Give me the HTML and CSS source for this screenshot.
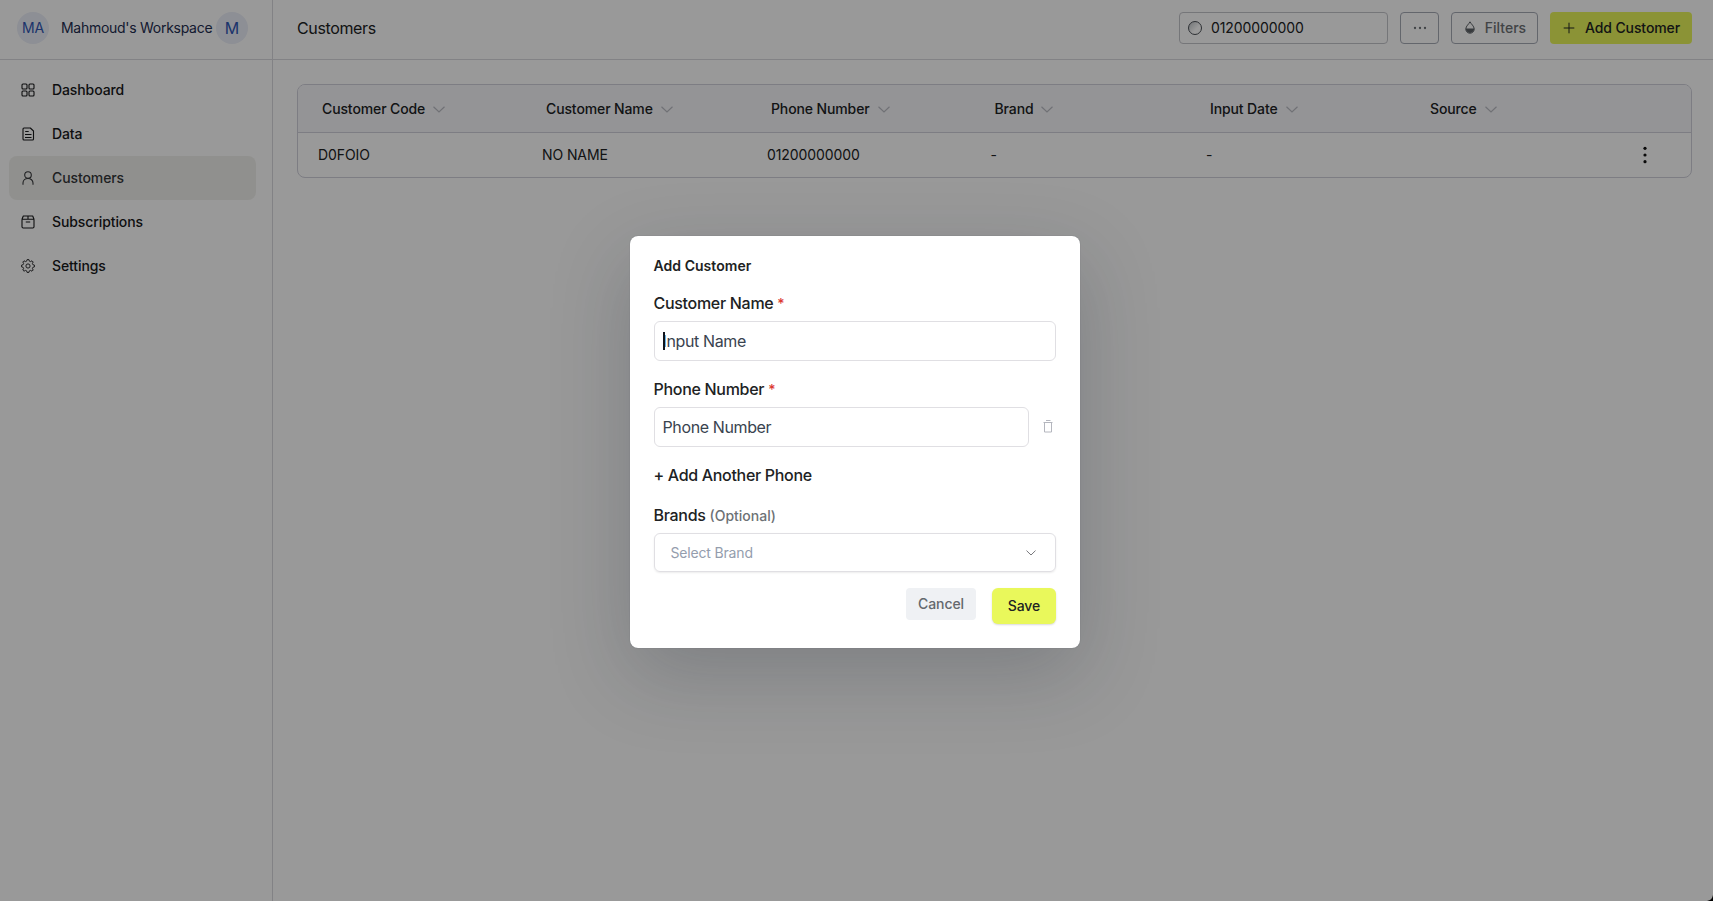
FILE: index.html
```html
<!DOCTYPE html>
<html lang="en">
<head>
<meta charset="utf-8">
<title>Customers</title>
<link rel="stylesheet" href="styles.css">
</head>
<body>
<div class="app">
  <aside class="sidebar">
    <div class="workspace">
      <span class="avatar avatar-small">MA</span>
      <span class="workspace-name">Mahmoud's Workspace</span>
      <span class="avatar">M</span>
    </div>
    <nav class="nav">
      <a class="nav-item"><svg class="icon" viewBox="0 0 16 16"><rect x="2" y="2" width="5" height="5" rx="1"/><rect x="9" y="2" width="5" height="5" rx="1"/><rect x="2" y="9" width="5" height="5" rx="1"/><rect x="9" y="9" width="5" height="5" rx="1"/></svg>Dashboard</a>
      <a class="nav-item"><svg class="icon" viewBox="0 0 16 16"><path d="M4 2h6.300L13.500 5v8a1 1 0 0 1-1 1H4a1 1 0 0 1-1-1V3a1 1 0 0 1 1-1zM5.200 5.500h3.500M5 8.500h6.500M5 11.500h6.500"/></svg>Data</a>
      <a class="nav-item active"><svg class="icon" viewBox="0 0 16 16"><circle cx="8" cy="5" r="3.300"/><path d="M3 14.700V13c0-2.600 2.200-4.500 5-4.500s5 1.900 5 4.500v1.700"/></svg>Customers</a>
      <a class="nav-item"><svg class="icon" viewBox="0 0 16 16"><path d="M2 5.300h12v7.500a1.200 1.200 0 0 1-1.200 1.200H3.200A1.200 1.200 0 0 1 2 12.800zM2 5.300L3.300 2h9.400L14 5.300M8 2v3.300M5.800 8h4.400"/></svg>Subscriptions</a>
      <a class="nav-item"><svg class="icon icon-gear" viewBox="0 0 16 16"><path d="M6.700 3.100L7.200 1.500h1.600l.5 1.600 1.200.5 1.500-.8 1.200 1.200-.8 1.500.5 1.200 1.600.5v1.600l-1.600.5-.5 1.200.8 1.500-1.200 1.200-1.500-.8-1.200.5-.5 1.600H7.200l-.5-1.600-1.200-.5-1.500.8L2.800 12l.8-1.500-.5-1.200-1.600-.5V7.200l1.600-.5.5-1.200L2.800 4 4 2.800l1.500.8z"/><circle cx="8" cy="8" r="2.100"/></svg>Settings</a>
    </nav>
  </aside>
  <div class="main">
    <header class="topbar">
      <h1 class="page-title">Customers</h1>
      <div class="search"><span class="orb"></span>01200000000</div>
      <button class="btn btn-more"><svg class="dots" viewBox="0 0 14 4"><circle cx="2" cy="2" r="1.150"/><circle cx="7" cy="2" r="1.150"/><circle cx="12" cy="2" r="1.150"/></svg></button>
      <button class="btn btn-filters"><svg class="drop" viewBox="0 0 10 13"><path class="drop-line" d="M5 .8C4 3 .8 5.100.8 8a4.200 4.200 0 0 0 8.400 0C9.200 5.100 6 3 5 .8z"/><path class="drop-fill" d="M.8 7.500h8.400a4.200 4.400 0 0 1-8.400 0z"/></svg>Filters</button>
      <button class="btn btn-add"><svg class="plus" viewBox="0 0 12 12"><path d="M6 .7v10.600M.7 6h10.600"/></svg>Add Customer</button>
    </header>
    <section class="table">
      <div class="row head">
        <span>Customer Code<svg class="chev" viewBox="0 0 12 7"><path d="M.5.800l5.500 5.200L11.500.8"/></svg></span>
        <span>Customer Name<svg class="chev" viewBox="0 0 12 7"><path d="M.5.800l5.500 5.200L11.500.8"/></svg></span>
        <span>Phone Number<svg class="chev" viewBox="0 0 12 7"><path d="M.5.800l5.500 5.200L11.500.8"/></svg></span>
        <span>Brand<svg class="chev" viewBox="0 0 12 7"><path d="M.5.800l5.500 5.200L11.500.8"/></svg></span>
        <span>Input Date<svg class="chev" viewBox="0 0 12 7"><path d="M.5.800l5.500 5.200L11.500.8"/></svg></span>
        <span>Source<svg class="chev" viewBox="0 0 12 7"><path d="M.5.800l5.500 5.200L11.500.8"/></svg></span>
      </div>
      <div class="row body">
        <span>D0FOIO</span><span>NO NAME</span><span>01200000000</span><span>-</span><span>-</span><span></span>
        <span><svg class="kebab" viewBox="0 0 4 18"><circle cx="2" cy="2.300" r="1.600"/><circle cx="2" cy="9" r="1.600"/><circle cx="2" cy="15.700" r="1.600"/></svg></span>
      </div>
    </section>
  </div>
</div>
<div class="overlay">
  <div class="modal">
    <h2 class="modal-title">Add Customer</h2>
    <label class="label">Customer Name <span class="req">*</span></label>
    <div class="input"><span class="caret"></span>Input Name</div>
    <label class="label label-phone">Phone Number <span class="req">*</span></label>
    <div class="phone-row">
      <div class="input">Phone Number</div>
      <svg class="trash" viewBox="0 0 10 13"><path d="M3 .5h4.500M.5 2.500h9M1.500 2.500v9.500h7V2.500"/></svg>
    </div>
    <div class="add-phone">+ Add Another Phone</div>
    <label class="label label-brand">Brands <span class="optional">(Optional)</span></label>
    <div class="select">Select Brand<svg class="select-chev" viewBox="0 0 10 6"><path d="M.5.600L5 5 9.500.6"/></svg></div>
    <div class="actions"><button class="btn btn-cancel">Cancel</button><button class="btn btn-save">Save</button></div>
  </div>
</div>
<svg class="corner" viewBox="0 0 6 6"><path d="M6 0v6H0C3.500 5.500 5.500 3.500 6 0z"/></svg>
</body>
</html>
```
FILE: styles.css
```css
* { box-sizing: border-box; }
body { margin: 0; font: 14px/20px Inter, sans-serif; letter-spacing: -.1px; color: #202223; background: #fff; overflow: hidden; }
svg { display: block; flex: none; fill: none; }
.app { display: flex; height: 901px; }
.sidebar { width: 273px; border-right: 1px solid #d9d9de; }
.workspace { height: 60px; border-bottom: 1px solid #d9d9de; display: flex; align-items: center; padding: 0 0 4px 17px; color: #1e2d50; }
.avatar { width: 32px; height: 32px; border-radius: 50%; background: #ebeef8; color: #3056b4; display: flex; align-items: center; justify-content: center; font-size: 16px; font-weight: 400; flex: none; }
.avatar-small { font-size: 14px; font-weight: 400; }
.workspace-name { width: 155px; margin: 0 0 0 12px; white-space: nowrap; letter-spacing: -.28px; }
.nav { padding: 8px 16px 0 9px; }
.nav-item { height: 44px; border-radius: 8px; display: flex; align-items: center; gap: 16px; padding-left: 11px; font-weight: 500; color: #18191b; }
.nav-item.active { background: #f1f1ed; color: #35373a; }
.icon { width: 16px; height: 16px; stroke: currentColor; stroke-width: 1.100; stroke-linejoin: round; }
.icon-gear { stroke-width: .9; }
.main { flex: 1; }
.topbar { height: 60px; border-bottom: 1px solid #d9d9de; display: flex; align-items: center; gap: 12px; padding: 0 21px 4px 24px; }
.page-title { flex: 1; margin: 0; font-size: 16px; font-weight: 400; letter-spacing: -.36px; }
.search { width: 209px; height: 32px; border: 1px solid #c4c5ca; border-radius: 4px; display: flex; align-items: center; gap: 9px; padding-left: 8px; }
.orb { width: 14px; height: 14px; border-radius: 50%; border: 1px solid #4c5158; background: linear-gradient(135deg, #bfc3c7, #fff 60%); }
.btn { height: 32px; font: 500 14px/20px Inter, sans-serif; letter-spacing: -.1px; border-radius: 4px; border: 0; display: flex; align-items: center; justify-content: center; padding: 0; }
.btn-more, .btn-filters { border: 1px solid #a5aab5; background: #fff; color: #6d7175; }
.btn-more { width: 39px; }
.dots { width: 14px; height: 4px; fill: #6d7175; }
.btn-filters { width: 87px; gap: 10px; padding-left: 2px; letter-spacing: 0; }
.drop { width: 10px; height: 13px; }
.drop-line { stroke: #5c6166; }
.drop-fill { fill: #5c6166; }
.btn-add { width: 142px; gap: 10px; background: #e8f65a; color: #202223; padding-left: 1px; }
.plus { width: 12px; height: 12px; stroke: #202223; }
.table { margin: 24px 21px 0 24px; height: 94px; border: 1px solid #d0d0db; border-radius: 8px; overflow: hidden; }
.row { display: grid; grid-template-columns: 224px 225px 223.500px 215.500px 220px 216px 1fr; align-items: center; padding-left: 20px; }
.head { height: 48px; background: #f7f7fb; border-bottom: 1px solid #d0d0db; font-weight: 500; padding-left: 24px; letter-spacing: -.12px; }
.head span { display: flex; align-items: center; gap: 8px; }
.body { height: 44px; }
.chev { width: 12px; height: 7px; margin-top: 1px; stroke: #bbbcc4; stroke-width: 1.200; }
.kebab { width: 4px; height: 18px; fill: #111; margin-left: 1px; }
.overlay { position: absolute; inset: 0; background: rgba(0,0,0,.4); display: flex; align-items: flex-start; justify-content: center; padding: 236px 3px 0 0; }
.modal { width: 450px; height: 412px; padding: 20px 24px 24px; background: #fff; border-radius: 8px; box-shadow: 0 26px 80px rgba(28,36,50,.22), 0 0 1px rgba(28,36,50,.4); }
.modal-title { margin: 0 0 15px -.5px; font-size: 14px; line-height: 20px; font-weight: 600; letter-spacing: .04px; }
.label { display: block; margin-left: -.5px; font-size: 16px; line-height: 24px; font-weight: 500; letter-spacing: -.3px; }
.req { color: #dc3932; font-size: 14px; }
.input { height: 40px; margin-top: 5px; border: 1px solid #e0dfe3; border-radius: 6px; padding: 0 7.500px; display: flex; align-items: center; font-size: 16px; letter-spacing: -.38px; color: #39434f; flex: 1; position: relative; }
.caret { position: absolute; left: 8px; top: 10px; width: 2px; height: 18px; background: #10141c; }
.label-phone { margin-top: 16px; }
.phone-row { display: flex; align-items: center; }
.trash { width: 10px; height: 13px; margin: 4px 3px 0 14px; stroke: #b4b6be; }
.add-phone { margin: 16px 0 0 -.5px; font-size: 16px; line-height: 24px; font-weight: 500; letter-spacing: -.32px; }
.label-brand { margin-top: 16px; }
.optional { font-size: 14px; font-weight: 500; color: #6d7175; letter-spacing: 0; }
.select { height: 39px; margin-top: 5px; border: 1px solid #e0dfe3; border-radius: 6px; box-shadow: 0 1px 2px rgba(0,0,0,.08); padding: 0 19px 0 15.500px; display: flex; align-items: center; justify-content: space-between; letter-spacing: -.17px; color: #949dad; }
.select-chev { width: 10px; height: 6px; stroke: #77777b; }
.actions { display: flex; justify-content: flex-end; align-items: flex-start; gap: 16px; margin-top: 16px; }
.btn-cancel { width: 70px; background: #eff1f4; color: #64686d; }
.btn-save { width: 64px; height: 36px; border-radius: 6px; background: #e9f85b; color: #202223; box-shadow: 0 1px 2px rgba(0,0,0,.15); }
.corner { position: absolute; right: 0; bottom: 0; width: 6px; height: 6px; fill: #000; }
```
